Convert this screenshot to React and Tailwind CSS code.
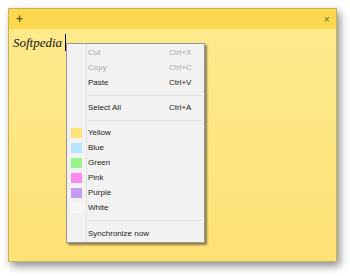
export default function App() {
  const ui = { fontFamily: '"Liberation Sans", "Open Sans", sans-serif' };
  const Item = ({ label, shortcut, disabled, swatch }) => (
    <div className="flex h-[15px] items-center">
      <div className="flex h-full w-[19px] items-center justify-center">
        {swatch && <div className={`h-[10px] w-[11px] ${swatch}`} />}
      </div>
      <div className={`ml-[2px] w-[81px] text-[8px] leading-none ${disabled ? 'text-[#a6a6a6]' : 'text-[#1a1a1a]'}`}>{label}</div>
      <div className={`flex-1 text-[8px] leading-none ${disabled ? 'text-[#a6a6a6]' : 'text-[#1a1a1a]'}`}>{shortcut}</div>
    </div>
  );
  const Sep = ({ h }) => (
    <div className={`flex ${h} items-center`}>
      <div className="ml-[21px] mr-[2px] h-px flex-1 bg-[#e0e0e0]" />
    </div>
  );
  return (
    <div className="relative h-[276px] w-[350px] overflow-hidden bg-white" style={ui}>
      <div className="absolute left-[8px] top-[8px] flex h-[254px] w-[329px] flex-col border border-[#c8b25a] shadow-[3px_4px_8px_rgba(0,0,0,0.45)]">
        <div className="flex h-[20px] items-center justify-between bg-[#fcd84e] pl-[7px] pr-[6px]">
          <span className="text-[12px] font-bold leading-none text-[#6b5a1a]">+</span>
          <span className="text-[11px] leading-none text-[#7a6a30]">×</span>
        </div>
        <div className="relative flex-1 bg-gradient-to-b from-[#feea8c] to-[#fee176]">
          <div className="flex items-center pl-[4px] pt-[5px]">
            <span className="text-[13px] italic leading-none text-[#111]" style={{ fontFamily: '"Liberation Serif", serif' }}>Softpedia</span>
            <span className="ml-[3px] h-[17px] w-px bg-black" />
          </div>
        </div>
      </div>
      <div className="absolute left-[66px] top-[43px] h-[200px] w-[139px] border border-[#979797] bg-[#f2f2f2] py-[1px] shadow-[2px_2px_2px_rgba(0,0,0,0.45)]">
        <div className="pointer-events-none absolute bottom-0 left-[19px] top-0 w-px bg-[#e2e2e2]" />
        <div className="relative flex flex-col">
          <Item label="Cut" shortcut="Ctrl+X" disabled />
          <Item label="Copy" shortcut="Ctrl+C" disabled />
          <Item label="Paste" shortcut="Ctrl+V" />
          <Sep h="h-[10px]" />
          <Item label="Select All" shortcut="Ctrl+A" />
          <Sep h="h-[10px]" />
          <Item label="Yellow" swatch="bg-[#fde27a]" />
          <Item label="Blue" swatch="bg-[#b5e4fb]" />
          <Item label="Green" swatch="bg-[#98f58a]" />
          <Item label="Pink" swatch="bg-[#fb8bf0]" />
          <Item label="Purple" swatch="bg-[#c49af7]" />
          <Item label="White" swatch="bg-[#f7f7f7]" />
          <Sep h="h-[11px]" />
          <Item label="Synchronize now" />
        </div>
      </div>
    </div>
  );
}
